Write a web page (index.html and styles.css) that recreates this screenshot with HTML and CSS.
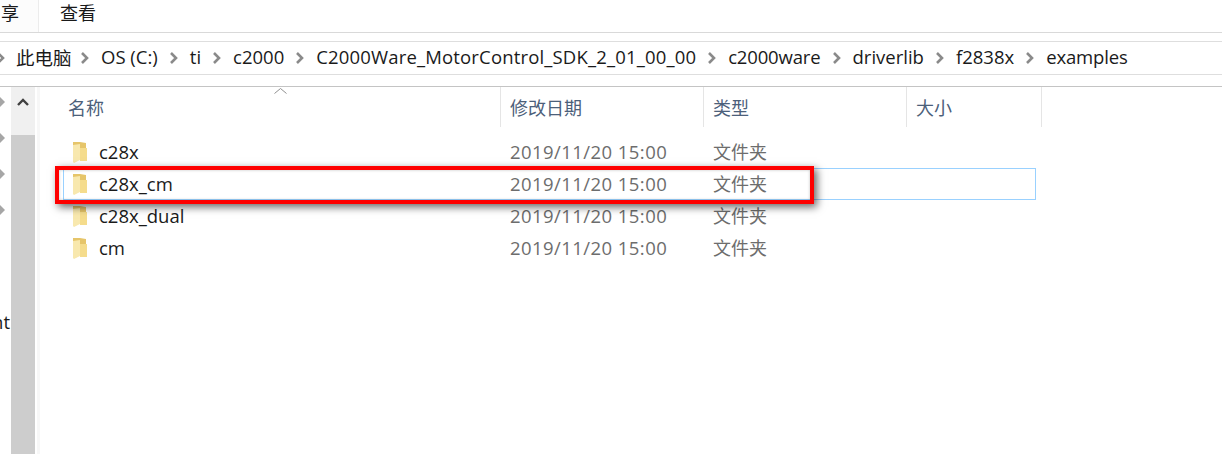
FILE: index.html
```html
<!DOCTYPE html>
<html lang="zh-CN">
<head>
  <meta charset="UTF-8">
  <title>examples</title>
  <link rel="stylesheet" href="styles.css">
</head>
<body>
  <div class="ribbon">
    <div class="tab tab-share">享</div>
    <div class="tab tab-view">查看</div>
  </div>
  <div class="address">
    <svg class="crumb-arrow first" viewBox="0 0 8 12"><path d="M1 1l5 5-5 5" /></svg>
    <span class="crumb-pc">此电脑</span>
    <svg class="crumb-arrow" viewBox="0 0 8 12"><path d="M1 1l5 5-5 5" /></svg>
    <span>OS (C:)</span>
    <svg class="crumb-arrow" viewBox="0 0 8 12"><path d="M1 1l5 5-5 5" /></svg>
    <span>ti</span>
    <svg class="crumb-arrow" viewBox="0 0 8 12"><path d="M1 1l5 5-5 5" /></svg>
    <span>c2000</span>
    <svg class="crumb-arrow" viewBox="0 0 8 12"><path d="M1 1l5 5-5 5" /></svg>
    <span class="crumb-long">C2000Ware_MotorControl_SDK_2_01_00_00</span>
    <svg class="crumb-arrow" viewBox="0 0 8 12"><path d="M1 1l5 5-5 5" /></svg>
    <span class="crumb-tight">c2000ware</span>
    <svg class="crumb-arrow" viewBox="0 0 8 12"><path d="M1 1l5 5-5 5" /></svg>
    <span>driverlib</span>
    <svg class="crumb-arrow" viewBox="0 0 8 12"><path d="M1 1l5 5-5 5" /></svg>
    <span>f2838x</span>
    <svg class="crumb-arrow" viewBox="0 0 8 12"><path d="M1 1l5 5-5 5" /></svg>
    <span class="crumb-tight">examples</span>
  </div>
  <div class="main">
    <div class="nav">
      <svg class="nav-arrow" viewBox="0 0 6 12"><path d="M0 1l5 5-5 5z" /></svg>
      <svg class="nav-arrow" viewBox="0 0 6 12"><path d="M0 1l5 5-5 5z" /></svg>
      <svg class="nav-arrow" viewBox="0 0 6 12"><path d="M0 1l5 5-5 5z" /></svg>
      <svg class="nav-arrow" viewBox="0 0 6 12"><path d="M0 1l5 5-5 5z" /></svg>
      <div class="nav-label">nt</div>
    </div>
    <div class="scrollbar">
      <div class="scroll-up">
        <svg viewBox="0 0 12 8"><path d="M1 7l5-5 5 5" /></svg>
      </div>
      <div class="scroll-thumb"></div>
    </div>
    <div class="files">
      <svg class="sort-mark" viewBox="0 0 13 6"><path d="M0.5 5.5l6-5 6 5" /></svg>
      <div class="head">
        <div class="col col-name">名称</div>
        <div class="col col-date">修改日期</div>
        <div class="col col-type">类型</div>
        <div class="col col-size">大小</div>
      </div>
      <div class="row">
        <svg class="folder" viewBox="0 0 14 21"><path class="folder-back" d="M0 0h7l6 1v7H7l-7 2z" /><path class="folder-right" d="M7 6h7v13H7z" /><path class="folder-page" d="M0 3l7-1v16l-6 3-1-1z" /></svg>
        <span class="name">c28x</span><span class="date">2019/11/20 15:00</span><span class="type">文件夹</span>
      </div>
      <div class="row selected">
        <svg class="folder" viewBox="0 0 14 21"><path class="folder-back" d="M0 0h7l6 1v7H7l-7 2z" /><path class="folder-right" d="M7 6h7v13H7z" /><path class="folder-page" d="M0 3l7-1v16l-6 3-1-1z" /></svg>
        <span class="name">c28x_cm</span><span class="date">2019/11/20 15:00</span><span class="type">文件夹</span>
      </div>
      <div class="row">
        <svg class="folder" viewBox="0 0 14 21"><path class="folder-back" d="M0 0h7l6 1v7H7l-7 2z" /><path class="folder-right" d="M7 6h7v13H7z" /><path class="folder-page" d="M0 3l7-1v16l-6 3-1-1z" /></svg>
        <span class="name">c28x_dual</span><span class="date">2019/11/20 15:00</span><span class="type">文件夹</span>
      </div>
      <div class="row">
        <svg class="folder" viewBox="0 0 14 21"><path class="folder-back" d="M0 0h7l6 1v7H7l-7 2z" /><path class="folder-right" d="M7 6h7v13H7z" /><path class="folder-page" d="M0 3l7-1v16l-6 3-1-1z" /></svg>
        <span class="name">cm</span><span class="date">2019/11/20 15:00</span><span class="type">文件夹</span>
      </div>
    </div>
  </div>
  <div class="red-box"></div>
</body>
</html>
```

FILE: styles.css
```css
html, body {
  margin: 0;
  height: 454px;
  overflow: hidden;
  background: #fff;
}

body {
  font-family: "Open Sans", "Noto Sans CJK SC", sans-serif;
  font-size: 18.5px;
  color: #1a1a1a;
  position: relative;
}

.ribbon {
  display: flex;
  height: 32px;
  border-bottom: 1px solid #d9d9d9;
  font-size: 18px;
}

.tab {
  line-height: 27px;
}

.tab-share {
  width: 39px;
  border-right: 1px solid #ececec;
  background: #fcfcfc;
  box-sizing: border-box;
  padding-left: 1px;
}

.tab-view {
  padding-left: 21px;
}

.address {
  margin-top: 8px;
  height: 32px;
  border-top: 1px solid #dedede;
  border-bottom: 1px solid #dedede;
  display: flex;
  align-items: center;
  white-space: nowrap;
}

.address span {
  padding-bottom: 3px;
}

.address .crumb-pc {
  margin-right: -2.5px;
}

.address .crumb-long {
  letter-spacing: 0.16px;
}

.address .crumb-tight {
  letter-spacing: -0.15px;
}

.crumb-arrow {
  width: 8px;
  height: 12px;
  margin: 0 12px;
  flex: none;
}

.crumb-arrow.first {
  margin: 0 11px 0 -3px;
}

.crumb-arrow path {
  fill: none;
  stroke: #8a8a8a;
  stroke-width: 2.6;
}

.main {
  margin-top: 11px;
  border-top: 1px solid #c4c4c4;
  display: flex;
  height: 367px;
}

.nav {
  width: 11px;
  flex: none;
  overflow: hidden;
  padding-top: 9px;
  position: relative;
}

.nav-arrow {
  display: block;
  width: 6px;
  height: 12px;
  margin-bottom: 24px;
}

.nav-arrow path {
  fill: #a6a6a6;
}

.nav-label {
  position: absolute;
  right: 1px;
  top: 222px;
}

.scrollbar {
  width: 24px;
  flex: none;
  display: flex;
  flex-direction: column;
  background: #f0f0f0;
  border-right: 2px solid #fff;
}

.scroll-up {
  height: 48px;
  display: flex;
  justify-content: center;
  padding-top: 11px;
  box-sizing: border-box;
}

.scroll-up svg {
  width: 12px;
  height: 8px;
}

.scroll-up path {
  fill: none;
  stroke: #404040;
  stroke-width: 2.4;
}

.scroll-thumb {
  flex: 1;
  background: #cdcdcd;
}

.files {
  flex: 1;
  border-left: 3px solid #f7f7f7;
  position: relative;
}

.sort-mark {
  position: absolute;
  left: 234px;
  top: 1px;
  width: 13px;
  height: 6px;
}

.sort-mark path {
  fill: none;
  stroke: #8f8f8f;
  stroke-width: 1;
}

.head {
  display: flex;
  height: 40px;
  color: #4c607a;
  font-size: 18px;
  line-height: 39px;
  margin-bottom: 9px;
}

.col {
  box-sizing: border-box;
  padding-left: 9px;
  padding-top: 2px;
  border-right: 1px solid #e5e5e5;
}

.col-name {
  width: 461px;
  padding-left: 28px;
}

.col-date,
.col-type {
  width: 203px;
}

.col-size {
  width: 135px;
}

.row {
  display: flex;
  align-items: center;
  height: 32px;
  box-sizing: border-box;
  margin-left: 23px;
  width: 973px;
  color: #6d6d6d;
  padding-left: 10px;
}

.row span {
  padding-bottom: 2px;
}

.row.selected {
  border: 1px solid #99d1ff;
  padding-left: 9px;
}

.folder {
  width: 14px;
  height: 21px;
  flex: none;
  margin-right: 12px;
}

.folder-back {
  fill: #e6c56a;
}

.folder-right {
  fill: #f5dc8c;
}

.folder-page {
  fill: #f8e8ae;
}

.name {
  width: 411px;
  color: #1a1a1a;
}

.date {
  width: 203px;
  letter-spacing: 0.44px;
}

.type {
  font-size: 18px;
}

.red-box {
  position: absolute;
  left: 55px;
  top: 166px;
  width: 751px;
  height: 30px;
  border: 4px solid #fe0000;
  box-shadow: 3px 3px 8px rgba(0, 0, 0, 0.6), inset 0 0 3px rgba(0, 0, 0, 0.25);
}
```
